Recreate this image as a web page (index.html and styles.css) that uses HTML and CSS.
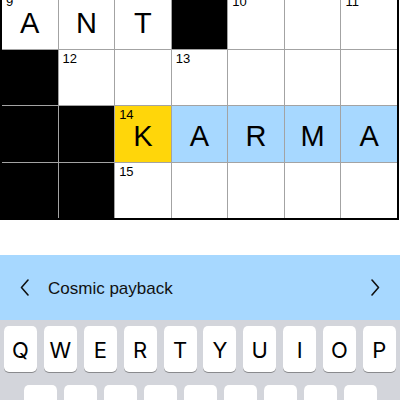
FILE: index.html
```html
<!DOCTYPE html>
<html lang="en">
<head>
    <meta charset="UTF-8">
    <meta name="viewport" content="width=device-width, initial-scale=1.0">
    <title>Crossword</title>
    <link rel="stylesheet" href="styles.css">
</head>
<body>
    <!-- puzzle grid -->
    <div class="board">
        <div class="cell"><span class="num">9</span>A</div>
        <div class="cell">N</div>
        <div class="cell">T</div>
        <div class="cell block"></div>
        <div class="cell"><span class="num">10</span></div>
        <div class="cell"></div>
        <div class="cell"><span class="num">11</span></div>

        <div class="cell block"></div>
        <div class="cell"><span class="num">12</span></div>
        <div class="cell"></div>
        <div class="cell"><span class="num">13</span></div>
        <div class="cell"></div>
        <div class="cell"></div>
        <div class="cell"></div>

        <div class="cell block"></div>
        <div class="cell block"></div>
        <div class="cell active"><span class="num">14</span>K</div>
        <div class="cell word">A</div>
        <div class="cell word">R</div>
        <div class="cell word">M</div>
        <div class="cell word">A</div>

        <div class="cell block"></div>
        <div class="cell block"></div>
        <div class="cell"><span class="num">15</span></div>
        <div class="cell"></div>
        <div class="cell"></div>
        <div class="cell"></div>
        <div class="cell"></div>
    </div>

    <!-- current clue -->
    <div class="clue-bar">
        <svg class="chevron" width="9" height="17" viewBox="0 0 9 17">
            <polyline points="8,1 1.5,8.5 8,16" fill="none" stroke="#111" stroke-width="1.6" stroke-linecap="round" stroke-linejoin="round"/>
        </svg>
        <span class="clue-text">Cosmic payback</span>
        <svg class="chevron" width="9" height="17" viewBox="0 0 9 17">
            <polyline points="1,1 7.5,8.5 1,16" fill="none" stroke="#111" stroke-width="1.6" stroke-linecap="round" stroke-linejoin="round"/>
        </svg>
    </div>

    <!-- keyboard -->
    <div class="keyboard">
        <div class="key-row">
            <div class="key">Q</div>
            <div class="key">W</div>
            <div class="key">E</div>
            <div class="key">R</div>
            <div class="key">T</div>
            <div class="key">Y</div>
            <div class="key">U</div>
            <div class="key">I</div>
            <div class="key">O</div>
            <div class="key">P</div>
        </div>
        <div class="key-row middle">
            <div class="key">A</div>
            <div class="key">S</div>
            <div class="key">D</div>
            <div class="key">F</div>
            <div class="key">G</div>
            <div class="key">H</div>
            <div class="key">J</div>
            <div class="key">K</div>
            <div class="key">L</div>
        </div>
    </div>
</body>
</html>
```

FILE: styles.css
```css
body {
    margin: 0;
    background: #fff;
    font-family: "Liberation Sans", Arial, sans-serif;
    color: #000;
    overflow: hidden;
}
.board {
    display: grid;
    grid-template-columns: repeat(7, 1fr);
    grid-template-rows: repeat(4, 55.6px);
    gap: 1px;
    background: #a3a3a3;
    border: 2px solid #000;
    margin: -9px 1px 0 0;
}
.cell {
    position: relative;
    background: #fff;
    display: flex;
    align-items: center;
    justify-content: center;
    padding-top: 5px;
    box-sizing: border-box;
    font-size: 29px;
}
.cell.block {
    background: #000;
}
.cell.active {
    background: #ffd60a;
}
.cell.word {
    background: #a7d8ff;
}
.num {
    position: absolute;
    top: 1px;
    left: 4px;
    font-size: 13px;
}
.clue-bar {
    margin-top: 35px;
    height: 65px;
    background: #a7d8ff;
    display: flex;
    align-items: center;
    padding: 0 20px;
}
.clue-text {
    flex: 1;
    margin-left: 19px;
    font-size: 17px;
    color: #111;
    padding-top: 2px;
}
.keyboard {
    background: #d3d5db;
    padding-top: 6px;
    height: 100px;
}
.key-row {
    display: flex;
    justify-content: space-between;
    padding: 0 4px;
}
.key-row.middle {
    justify-content: center;
    gap: 7px;
    margin-top: 13px;
}
.key {
    width: 33px;
    height: 46px;
    background: #fff;
    border-radius: 5px;
    box-shadow: 0 1px 0 #898a8d;
    display: flex;
    align-items: center;
    justify-content: center;
    font-family: Inter, "Noto Sans", sans-serif;
    font-size: 22px;
    color: #000;
    padding-top: 1px;
    box-sizing: border-box;
}
```
